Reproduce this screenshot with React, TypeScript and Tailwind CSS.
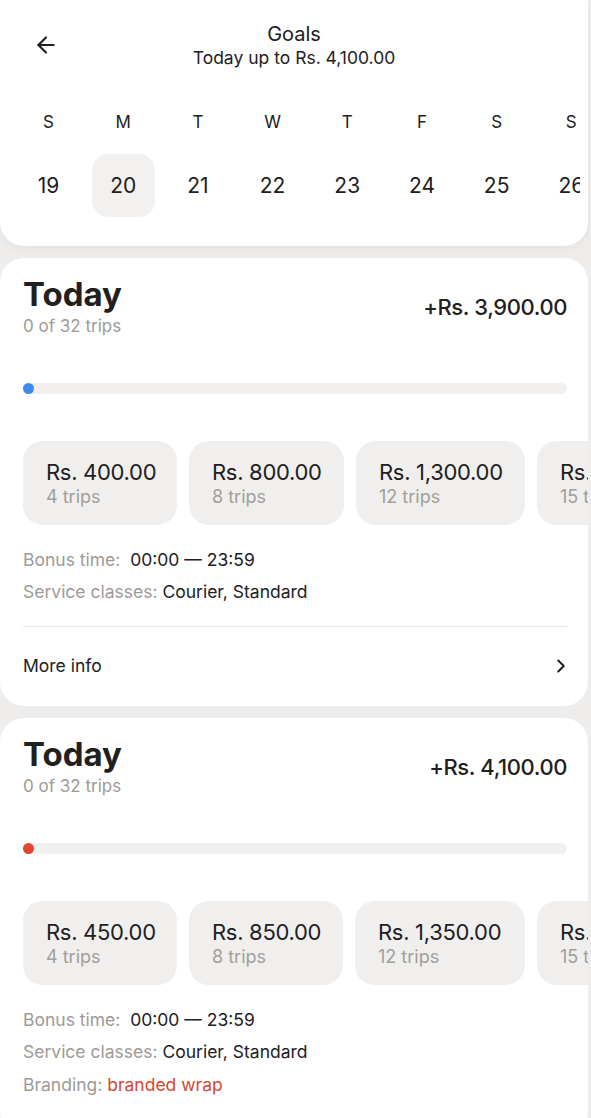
import { ArrowLeft, ChevronRight } from "lucide-react";

type Tier = { amount: string; trips: string; w: string };

const days = [
  { d: "S", n: "19" },
  { d: "M", n: "20", active: true },
  { d: "T", n: "21" },
  { d: "W", n: "22" },
  { d: "T", n: "23" },
  { d: "F", n: "24" },
  { d: "S", n: "25" },
  { d: "S", n: "26" },
];

const tiers1: Tier[] = [
  { amount: "Rs. 400.00", trips: "4 trips", w: "w-[154px]" },
  { amount: "Rs. 800.00", trips: "8 trips", w: "w-[155px]" },
  { amount: "Rs. 1,300.00", trips: "12 trips", w: "w-[169px]" },
  { amount: "Rs. 1,500.00", trips: "15 trips", w: "w-[169px]" },
];

const tiers2: Tier[] = [
  { amount: "Rs. 450.00", trips: "4 trips", w: "w-[154px]" },
  { amount: "Rs. 850.00", trips: "8 trips", w: "w-[154px]" },
  { amount: "Rs. 1,350.00", trips: "12 trips", w: "w-[170px]" },
  { amount: "Rs. 1,550.00", trips: "15 trips", w: "w-[170px]" },
];

const GoalCard = ({
  total,
  tiers,
  dot,
  branding,
}: {
  total: string;
  tiers: Tier[];
  dot: string;
  branding?: boolean;
}) => {
  return (
    <div className="mt-[12px] bg-white rounded-[24px] overflow-hidden pt-[17px]">
      <div className="flex justify-between items-start pl-[23px] pr-[21px]">
        <div>
          <div className="text-[33px] leading-[38px] font-bold text-[#21201f]">Today</div>
          <div className="mt-[2px] text-[17px] leading-[22px] text-[#9d9a97]">0 of 32 trips</div>
        </div>
        <div className="mt-[18px] text-[22px] leading-[28px] font-medium text-[#21201f] tracking-[-0.4px]">{total}</div>
      </div>

      {/* progress */}
      <div className="mt-[46px] ml-[23px] mr-[21px] h-[11px] rounded-full bg-[#f1f0ee] relative">
        <div className={`absolute left-0 top-0 w-[11px] h-[11px] rounded-full ${dot}`}></div>
      </div>

      {/* tiers */}
      <div className="mt-[47px] flex gap-[12px] pl-[23px] overflow-hidden">
        {tiers.map((t) => (
          <div key={t.amount} className={`shrink-0 ${t.w} h-[84px] rounded-[20px] bg-[#f0efed] pt-[17px] px-[23px] whitespace-nowrap`}>
            <div className="text-[22px] leading-[28px] text-[#21201f] tracking-[-0.3px]">{t.amount}</div>
            <div className="text-[18px] leading-[22px] text-[#a19e9b]">{t.trips}</div>
          </div>
        ))}
      </div>

      <div className="pl-[23px] pr-[21px] text-[17.5px] leading-[22px]">
        <div className="mt-[24px]">
          <span className="text-[#9d9a97]">Bonus time:&nbsp; </span>
          <span className="text-[#21201f]">00:00 — 23:59</span>
        </div>
        <div className="mt-[10px]">
          <span className="text-[#9d9a97]">Service classes: </span>
          <span className="text-[#21201f]">Courier, Standard</span>
        </div>
        {branding ? (
          <div className="mt-[11px] pb-[40px]">
            <span className="text-[#9d9a97]">Branding: </span>
            <span className="text-[#d9452f]">branded wrap</span>
          </div>
        ) : (
          <>
            <div className="mt-[23px] h-px bg-[#e6e5e3]"></div>
            <div className="mt-[28px] pb-[29px] flex items-center justify-between text-[#21201f]">
              <span>More info</span>
              <ChevronRight size={22} strokeWidth={2.2} className="mr-[-5px]" />
            </div>
          </>
        )}
      </div>
    </div>
  );
};

export default function App() {
  return (
    <div className="min-h-screen bg-[#eeedeb] pr-[3px] overflow-hidden" style={{ fontFamily: "Inter, 'Noto Sans', sans-serif" }}>
      <div className="bg-white rounded-b-[24px] shadow-[0_2px_8px_rgba(0,0,0,0.05)] pb-[29px] overflow-hidden">
        <div className="flex items-start pt-[22px]">
          <div className="w-[80px] flex justify-start pl-[33px] pt-[10px]">
            <ArrowLeft size={26} strokeWidth={2} className="text-[#21201f]" />
          </div>
          <div className="flex-1 text-center text-[#21201f]">
            <div className="text-[20px] leading-[24px]">Goals</div>
            <div className="mt-[1px] text-[17.5px] leading-[22px]">Today up to Rs. 4,100.00</div>
          </div>
          <div className="w-[80px]"></div>
        </div>

        <div className="mt-[42px] mr-[8px] flex gap-[11.7px] pl-[17px] text-[#21201f] overflow-hidden">
          {days.map((d, i) => (
            <div key={i} className="shrink-0 w-[63px] flex flex-col items-center">
              <div className="text-[17px] leading-[22px]">{d.d}</div>
              <div
                className={`mt-[21px] w-[63px] h-[63px] rounded-[16px] flex items-center justify-center text-[21px] ${
                  d.active ? "bg-[#f2f1ef]" : ""
                }`}
              >
                {d.n}
              </div>
            </div>
          ))}
        </div>
      </div>

      <GoalCard total="+Rs. 3,900.00" tiers={tiers1} dot="bg-[#3d8cec]" />
      <GoalCard total="+Rs. 4,100.00" tiers={tiers2} dot="bg-[#e2472f]" branding />
    </div>
  );
}
